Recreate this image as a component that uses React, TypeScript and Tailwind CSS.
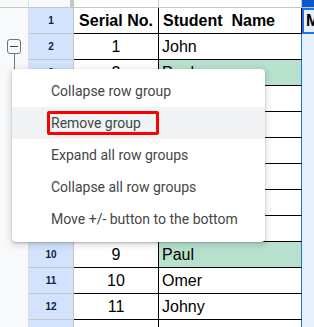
import React from 'react';

type Row = { n: number; serial: string; name: string; green?: boolean };

const rows: Row[] = [
    { n: 2, serial: '1', name: 'John' },
    { n: 3, serial: '2', name: 'Paul', green: true },
    { n: 4, serial: '3', name: 'Omer' },
    { n: 5, serial: '4', name: 'Johny' },
    { n: 6, serial: '5', name: 'Sara' },
    { n: 7, serial: '6', name: 'Ali' },
    { n: 8, serial: '7', name: 'Mark' },
    { n: 9, serial: '8', name: 'Emma' },
    { n: 10, serial: '9', name: 'Paul', green: true },
    { n: 11, serial: '10', name: 'Omer' },
    { n: 12, serial: '11', name: 'Johny' },
    { n: 13, serial: '', name: '' },
];

const menuItems = [
    'Collapse row group',
    'Remove group',
    'Expand all row groups',
    'Collapse all row groups',
    'Move +/- button to the bottom',
];

const cellFont = { fontFamily: '"Liberation Sans", Arial, sans-serif' };

const App: React.FC = () => {
    return (
        <div className="relative w-[314px] h-[327px] overflow-hidden bg-white flex" style={cellFont}>
            {/* group gutter */}
            <div className="w-[29px] flex-none flex flex-col bg-[#f8f9fa] border-r border-[#dadce0]">
                <div className="h-[8px] flex-none border-b border-[#c4c7c5]" />
                <div className="mt-[31px] ml-[7px] w-[14px] h-[15px] flex-none flex items-center justify-center border-[1.5px] border-[#6f7378] rounded-[3px] bg-[#f8f9fa]">
                    <div className="w-[8px] h-[1.5px] bg-[#3c4043]" />
                </div>
                <div className="ml-[13.5px] w-px h-[170px] bg-[#6f7378]" />
            </div>

            {/* sheet */}
            <div className="flex-1 flex flex-col">
                {/* column header strip */}
                <div className="h-[8px] flex-none flex border-b border-[#c4c7c5]">
                    <div className="w-[45px] flex-none flex bg-[#f8f9fa]">
                        <div className="w-[41px]" />
                        <div className="w-[4px] bg-[#c4c7c5]" />
                    </div>
                    <div className="w-[85px] flex-none border-r border-[#c4c7c5]" />
                    <div className="w-[143px] flex-none border-r border-[#c4c7c5]" />
                    <div className="flex-1 bg-[#0b57d0]" />
                </div>

                {/* header row */}
                <div className="h-[26px] flex-none flex">
                    <div className="w-[45px] flex-none flex items-center justify-center bg-[#d3e3fd] border-r border-b border-[#c4c7c5] text-[10px] font-bold text-[#0b1d45]">
                        1
                    </div>
                    <div className="w-[85px] flex-none flex items-center justify-center border-r border-b border-black text-[16px] font-bold text-black whitespace-nowrap overflow-visible">
                        Serial No.
                    </div>
                    <div className="w-[143px] flex-none flex items-center pl-[4px] border-r border-b border-black text-[16px] font-bold text-black whitespace-pre">
                        {'Student  Name'}
                    </div>
                    <div className="flex-1 flex items-center pl-[2px] bg-[#e8f0fe] border-2 border-[#1a73e8] text-[16px] font-bold text-black overflow-hidden">
                        M
                    </div>
                </div>

                {rows.map((r) => (
                    <div key={r.n} className="h-[26px] flex-none flex">
                        <div className="w-[45px] flex-none flex items-center justify-center bg-[#d3e3fd] border-r border-b border-[#c4c7c5] text-[10px] font-bold text-[#0b1d45]">
                            {r.n < 13 ? r.n : ''}
                        </div>
                        <div className="w-[85px] flex-none flex items-center justify-center pt-[1px] border-r border-b border-black text-[16px] text-black">
                            {r.serial}
                        </div>
                        <div
                            className={`w-[143px] flex-none flex items-center pl-[3px] pt-[1px] border-b border-black border-r-[#1a73e8] border-r text-[16px] text-black ${
                                r.green ? 'bg-[#b7e1cd]' : 'bg-white'
                            }`}
                        >
                            {r.name}
                        </div>
                        <div className="flex-1 bg-[#e8f0fe]" />
                    </div>
                ))}
            </div>

            {/* context menu */}
            <div
                className="absolute left-[12px] top-[69px] w-[253px] bg-white rounded-[4px] pt-[6px] pb-[7px] shadow-[0_1px_2px_rgba(60,64,67,0.3),0_2px_6px_2px_rgba(60,64,67,0.15)]"
                style={{ fontFamily: 'Roboto, "Liberation Sans", sans-serif' }}
            >
                {menuItems.map((item, i) => (
                    <div
                        key={item}
                        className={`relative h-[32px] flex items-center pl-[39px] text-[14px] text-[#444746] ${
                            i === 1 ? 'bg-[#f1f3f4]' : ''
                        }`}
                    >
                        {item}
                        {i === 1 && (
                            <div className="absolute left-[35px] top-[4px] w-[112px] h-[24px] border-[3px] border-[#ff0000] rounded-[2px]" />
                        )}
                    </div>
                ))}
            </div>
        </div>
    );
};

export default App;
